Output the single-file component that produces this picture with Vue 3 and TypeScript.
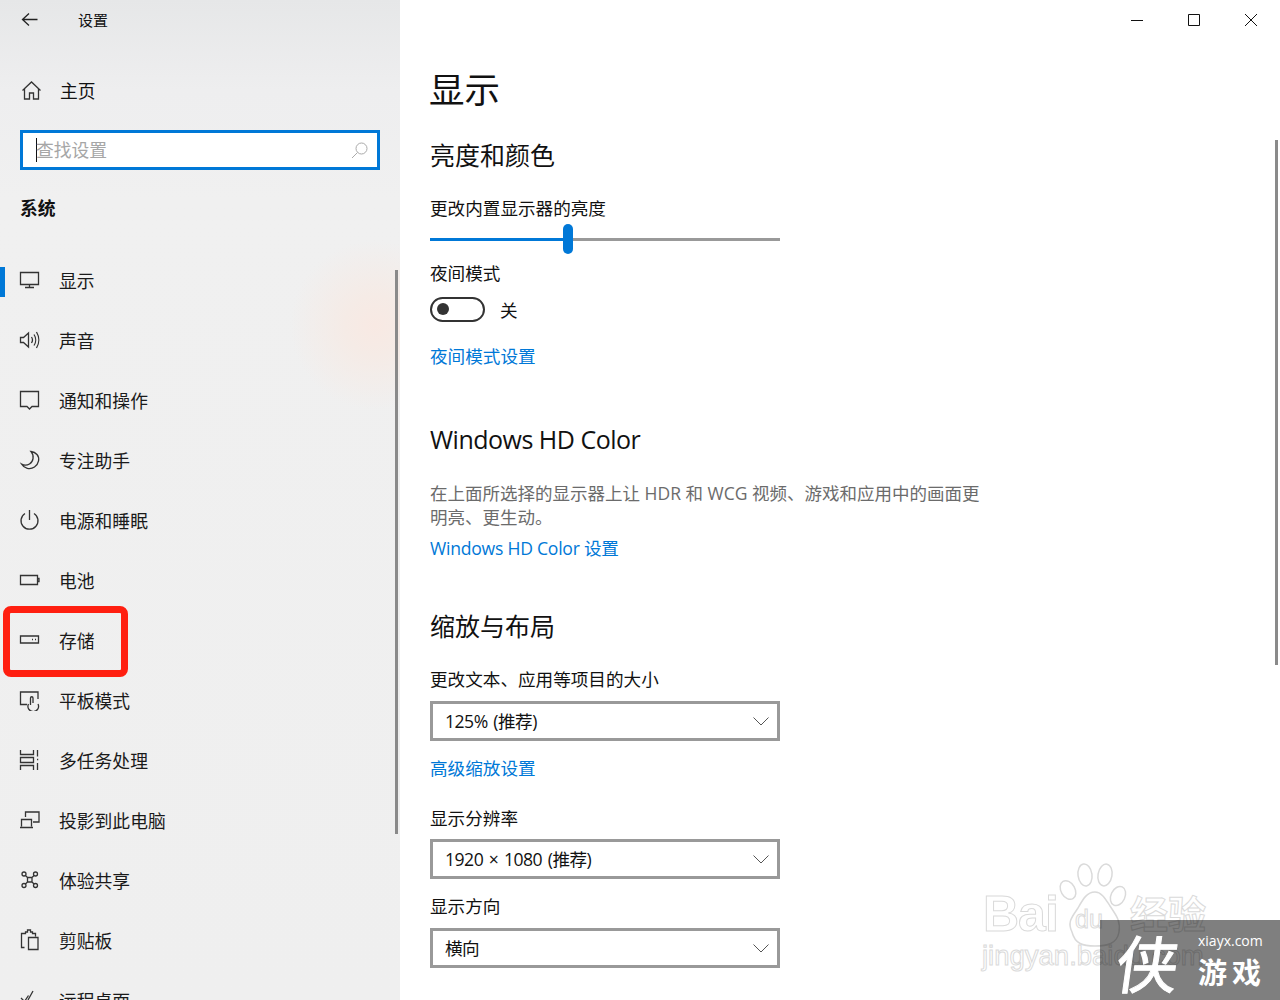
<script setup lang="ts">
interface NavItem {
  label: string
  icon: string
}

// 左侧导航
const navItems: NavItem[] = [
  { label: '显示', icon: 'M1.5 3.5h18v12h-18zM10.5 15.5v3M6 18.5h9' },
  { label: '声音', icon: 'M1.5 8.5h3l5-4.5v14l-5-4.5h-3zM12.5 8c1.2 1.8 1.2 4.2 0 6M15 5.5c2.2 3.2 2.2 7.8 0 11M17.5 3c3 4.8 3 11.2 0 16' },
  { label: '通知和操作', icon: 'M1.5 2.5h18v15h-6.5l-2.5 2.5-2.5-2.5h-6.5z' },
  { label: '专注助手', icon: 'M12 2.5c3.500 4 2.500 10-1.500 12.500-2.500 1.500-5.500 1.500-8 0 2.500 4.500 8.500 6 13 3 4.500-3 5.500-9 2.500-12.500-1.500-1.700-3.500-2.700-6-3z' },
  { label: '电源和睡眠', icon: 'M10.500 1v10M6 4.500a8.500 8.500 0 1 0 9 0' },
  { label: '电池', icon: 'M1.500 6.500h17v9h-17zM18.500 9.500h1.500v3h-1.500' },
  { label: '存储', icon: 'M1.500 7h18v7h-18zM13 10.500h1M16 10.500h1' },
  { label: '平板模式', icon: 'M8 15.500h-6.500v-12.500h17.500v7M9.500 15a5.300 5.300 0 1 0 9.500 0M11.500 16v-7a1.200 1.200 0 0 1 2.500 0v5' },
  { label: '多任务处理', icon: 'M1.500 1v4.500h13v-4.500M1.500 21v-4.500h13v4.500M1.500 8.500h13v5h-13zM18.500 1v6.500M18.500 14v7M18 10.500h1.200' },
  { label: '投影到此电脑', icon: 'M6.500 8v-5h13.500v10h-6M2.500 17.500v-7h10v7M1 18.500h13' },
  { label: '体验共享', icon: 'M8.500 8.500h4.500v4.500h-4.500zM8.500 8.500 6.700 6.700M13 8.500l1.800-1.800M8.500 13l-1.800 1.800M13 13l1.800 1.800M7 5a2 2 0 1 1-4 0 2 2 0 1 1 4 0M18.500 5a2 2 0 1 1-4 0 2 2 0 1 1 4 0M7 16.500a2 2 0 1 1-4 0 2 2 0 1 1 4 0M18.500 16.500a2 2 0 1 1-4 0 2 2 0 1 1 4 0' },
  { label: '剪贴板', icon: 'M5.500 18.500h-3v-14h4v-1.500h2v-2h3v2h2v1.500h3v3M9.500 8.500h9.500v12h-9.500z' },
  { label: '远程桌面', icon: 'M2 9l3.500 3.500 4-6M14 2l-5 9' },
]

const dropdowns = [
  { label: '更改文本、应用等项目的大小', value: '125% (推荐)', link: '高级缩放设置' },
  { label: '显示分辨率', value: '1920 × 1080 (推荐)', link: '' },
  { label: '显示方向', value: '横向', link: '' },
]
</script>

<template>
  <div class="window">
    <aside class="sidebar">
      <div class="titlebar">
        <svg class="back" width="18" height="16" viewBox="0 0 18 16">
          <path d="M8 1.500 1.500 7.500 8 13.500M1.500 7.500h15" />
        </svg>
        <span class="app-name">设置</span>
      </div>

      <div class="home">
        <svg class="nav-icon" width="21" height="21" viewBox="0 0 21 21">
          <path d="M1.500 10.500 10.500 2l9 8.500M3.500 9v10h5v-6h4v6h5v-10" />
        </svg>
        <span>主页</span>
      </div>

      <div class="search">
        <span class="caret"></span>
        <span class="placeholder">查找设置</span>
        <svg width="17" height="17" viewBox="0 0 17 17">
          <circle cx="10.500" cy="6.500" r="5.500" />
          <path d="M6.500 10.500 1 16" />
        </svg>
      </div>

      <div class="group-title">系统</div>

      <nav class="nav">
        <div
          v-for="(item, i) in navItems"
          :key="item.label"
          class="nav-item"
          :class="{ active: i === 0 }"
        >
          <svg class="nav-icon" width="21" height="22" viewBox="0 0 21 22">
            <path :d="item.icon" />
          </svg>
          <span>{{ item.label }}</span>
        </div>
      </nav>

      <div class="side-scroll"></div>
      <div class="red-mark"></div>
    </aside>

    <main class="content">
      <div class="win-controls">
        <svg width="12" height="12" viewBox="0 0 12 12"><path d="M0 6.500h12" /></svg>
        <svg width="12" height="12" viewBox="0 0 12 12"><path d="M.5.500h11v11h-11z" /></svg>
        <svg width="12" height="12" viewBox="0 0 12 12"><path d="M0 0l12 12M12 0 0 12" /></svg>
      </div>

      <h1>显示</h1>

      <h2 class="first">亮度和颜色</h2>
      <p class="label">更改内置显示器的亮度</p>
      <div class="slider">
        <div class="slider-fill"></div>
        <div class="slider-thumb"></div>
      </div>

      <p class="label night">夜间模式</p>
      <div class="toggle-row">
        <div class="toggle"><span></span></div>
        <span>关</span>
      </div>
      <a class="link night-link">夜间模式设置</a>

      <h2 class="hd">Windows HD Color</h2>
      <p class="desc">在上面所选择的显示器上让 HDR 和 WCG 视频、游戏和应用中的画面更明亮、更生动。</p>
      <a class="link hd-link">Windows HD Color 设置</a>

      <h2 class="scale">缩放与布局</h2>
      <div v-for="d in dropdowns" :key="d.label" class="field">
        <p class="label">{{ d.label }}</p>
        <div class="select">
          <span>{{ d.value }}</span>
          <svg width="16" height="9" viewBox="0 0 16 9"><path d="M.5.500 8 8 15.500.500" /></svg>
        </div>
        <a v-if="d.link" class="link scale-link">{{ d.link }}</a>
      </div>

      <div class="main-scroll"></div>
    </main>

    <!-- 水印 -->
    <div class="wm-baidu">
      <svg class="wm-paw" width="160" height="100" viewBox="0 0 160 100">
        <ellipse cx="88" cy="30" rx="7" ry="10" transform="rotate(-30 88 30)" />
        <ellipse cx="105" cy="15" rx="7" ry="11" transform="rotate(-8 105 15)" />
        <ellipse cx="125" cy="15" rx="7" ry="11" transform="rotate(10 125 15)" />
        <ellipse cx="138" cy="36" rx="7" ry="10" transform="rotate(25 138 36)" />
        <path d="M92 72c-5-10 0-15 6-24 5-9 9-16 17-16 7 0 11 8 15 14 5 8 11 14 9 26-2 12-12 14-24 14-12 0-20-2-23-14z" />
      </svg>
      <span class="wm-big">Bai</span>
      <span class="wm-big wm-du">du</span>
      <span class="wm-big wm-cn">经验</span>
      <span class="wm-small">jingyan.baidu.com</span>
    </div>
    <div class="wm-corner">
      <span class="wm-xia">侠</span>
      <span class="wm-site">xiayx.com</span>
      <span class="wm-game">游戏</span>
    </div>
  </div>
</template>

<style>
html,
body {
  margin: 0;
  background: #fff;
  overflow: hidden;
}
</style>

<style scoped>
.window {
  position: relative;
  display: flex;
  width: 1280px;
  height: 1000px;
  overflow: hidden;
  background: #fff;
  color: #111;
  font-family: "Open Sans", "Noto Sans CJK SC", sans-serif;
  font-size: 17.600px;
}

svg {
  fill: none;
  stroke: currentColor;
  stroke-width: 1.300;
  flex: none;
}

p,
h1,
h2 {
  margin: 0;
  font-weight: 400;
}

/* 侧边栏 */
.sidebar {
  position: relative;
  flex: none;
  width: 400px;
  height: 1000px;
  overflow: hidden;
  font-size: 17.800px;
  background:
    radial-gradient(circle at 375px 325px, #f8e9e3 0, #f5ebe6 30px, rgba(240, 240, 240, 0) 85px),
    linear-gradient(180deg, #e6e7e8 0, #eeeeef 90px, #f0f0f0 200px, #efefef 100%);
}

.titlebar {
  display: flex;
  align-items: center;
  height: 40px;
  padding-left: 21px;
}

.back {
  color: #222;
}

.app-name {
  margin-left: 39px;
  margin-top: -2px;
  font-size: 15px;
}

.home {
  display: flex;
  align-items: center;
  height: 62px;
  margin-top: 19px;
  padding-left: 21px;
}

.home .nav-icon {
  margin-right: 18px;
}

.search {
  display: flex;
  align-items: center;
  box-sizing: border-box;
  width: 360px;
  height: 40px;
  margin: 9px 0 0 20px;
  padding: 0 9px 0 13px;
  background: #fff;
  border: 3px solid #0078d7;
}

.search svg {
  color: #aaa;
  stroke-width: 1;
}

.caret {
  width: 1px;
  height: 24px;
  margin-right: -1px;
  background: #111;
}

.placeholder {
  flex: 1;
  margin-top: -2px;
  color: #a6a6a6;
}

.group-title {
  margin: 23px 0 0 20px;
  height: 30px;
  line-height: 30px;
  font-weight: 700;
}

.nav {
  margin-top: 29px;
}

.nav-item {
  position: relative;
  display: flex;
  align-items: center;
  box-sizing: border-box;
  height: 60px;
  padding: 0 0 4px 19px;
  color: #1a1a1a;
}

.nav-item .nav-icon {
  margin-right: 19px;
}

.nav-icon {
  color: #333;
}

.nav-item.active::before {
  content: "";
  position: absolute;
  left: 0;
  top: 15px;
  width: 5px;
  height: 30px;
  background: #0078d7;
}

.side-scroll {
  position: absolute;
  left: 395px;
  top: 270px;
  width: 3px;
  height: 564px;
  background: #8a8a8a;
}

.red-mark {
  position: absolute;
  left: 3px;
  top: 606px;
  box-sizing: border-box;
  width: 125px;
  height: 71px;
  border: 7px solid #ff1f10;
  border-radius: 8px;
}

/* 右侧内容 */
.content {
  position: relative;
  flex: 1;
  padding: 0 0 0 30px;
}

.win-controls {
  position: absolute;
  top: 14px;
  left: 731px;
  display: flex;
  gap: 45px;
  color: #111;
}

.win-controls svg {
  stroke-width: 1;
}

h1 {
  margin: 64px 0 0 -1px;
  height: 52px;
  line-height: 50px;
  font-size: 35.500px;
}

h2 {
  height: 36px;
  line-height: 36px;
  font-size: 25px;
}

h2.first {
  margin-top: 21px;
}

.label {
  height: 26px;
  line-height: 26px;
}

h2.first + .label {
  margin-top: 22px;
}

.slider {
  position: relative;
  width: 350px;
  height: 3px;
  margin-top: 17px;
  background: #999;
}

.slider-fill {
  width: 138px;
  height: 3px;
  background: #0078d7;
}

.slider-thumb {
  position: absolute;
  left: 133px;
  top: -14px;
  width: 10px;
  height: 30px;
  border-radius: 5px;
  background: #0078d7;
}

.label.night {
  margin-top: 19px;
}

.toggle-row {
  display: flex;
  align-items: center;
  gap: 15px;
  height: 26px;
  margin-top: 10px;
}

.toggle {
  display: flex;
  align-items: center;
  box-sizing: border-box;
  width: 55px;
  height: 25px;
  padding-left: 5px;
  border: 2.500px solid #333;
  border-radius: 13px;
}

.toggle span {
  width: 12px;
  height: 12px;
  border-radius: 50%;
  background: #333;
}

.link {
  display: block;
  height: 26px;
  line-height: 26px;
  color: #0078d7;
}

.night-link {
  margin-top: 21px;
}

h2.hd {
  margin-top: 52px;
  letter-spacing: -0.5px;
}

.desc {
  width: 552px;
  margin-top: 24px;
  font-size: 17.500px;
  line-height: 24px;
  color: #6b6b6b;
}

.hd-link {
  margin-top: 6px;
  letter-spacing: -0.25px;
}

h2.scale {
  margin-top: 47px;
}

.field .label {
  margin-top: 22px;
}

.field + .field + .field .label {
  margin-top: 14px;
}

.select {
  display: flex;
  align-items: center;
  justify-content: space-between;
  box-sizing: border-box;
  width: 350px;
  height: 40px;
  margin-top: 8px;
  padding: 0 8px 2px 12px;
  border: 3px solid #999;
  letter-spacing: -0.5px;
  word-spacing: 1.500px;
}

.select svg {
  color: #555;
  stroke-width: 1;
  margin-top: 2px;
}

h2.scale + .field .select,
.field + .field + .field .select {
  margin-top: 9px;
}

.scale-link {
  margin-top: 14px;
  margin-bottom: 24px;
}

.main-scroll {
  position: absolute;
  left: 875px;
  top: 140px;
  width: 3px;
  height: 525px;
  background: #8a8a8a;
}

/* 水印 */
.wm-baidu {
  position: absolute;
  left: 980px;
  top: 860px;
  width: 240px;
  height: 120px;
  font-family: "Liberation Sans", "Noto Sans CJK SC", sans-serif;
  color: #fff;
  -webkit-text-stroke: 1px #dadada;
}

.wm-paw {
  position: absolute;
  left: 0;
  top: 0;
  color: #dadada;
  fill: #fff;
  stroke-width: 1.500;
}

.wm-big {
  position: absolute;
  top: 24px;
  left: 3px;
  font-size: 50px;
  line-height: 60px;
  font-weight: 700;
  letter-spacing: -1px;
}

.wm-du {
  left: 95px;
  top: 44px;
  font-size: 25px;
  line-height: 30px;
  font-weight: 400;
  letter-spacing: 0;
}

.wm-cn {
  left: 150px;
  top: 33px;
  font-size: 38px;
  line-height: 44px;
  letter-spacing: 0;
}

.wm-small {
  position: absolute;
  left: 2px;
  top: 80px;
  font-size: 27.500px;
  line-height: 32px;
  white-space: nowrap;
}

.wm-corner {
  position: absolute;
  right: 0;
  bottom: 0;
  width: 180px;
  height: 80px;
  background: rgba(0, 0, 0, 0.5);
  color: #fff;
}

.wm-xia {
  position: absolute;
  left: 17px;
  top: 8px;
  font-size: 62px;
  line-height: 66px;
  font-family: "Noto Sans CJK SC", sans-serif;
  -webkit-text-stroke: 1px #fff;
  transform: skewX(-8deg);
}

.wm-site {
  position: absolute;
  left: 98px;
  top: 10px;
  font-size: 14px;
  line-height: 22px;
}

.wm-game {
  position: absolute;
  left: 98px;
  top: 32px;
  font-size: 29px;
  line-height: 38px;
  font-weight: 700;
  letter-spacing: 5px;
  font-family: "Noto Sans CJK SC", sans-serif;
}
</style>
